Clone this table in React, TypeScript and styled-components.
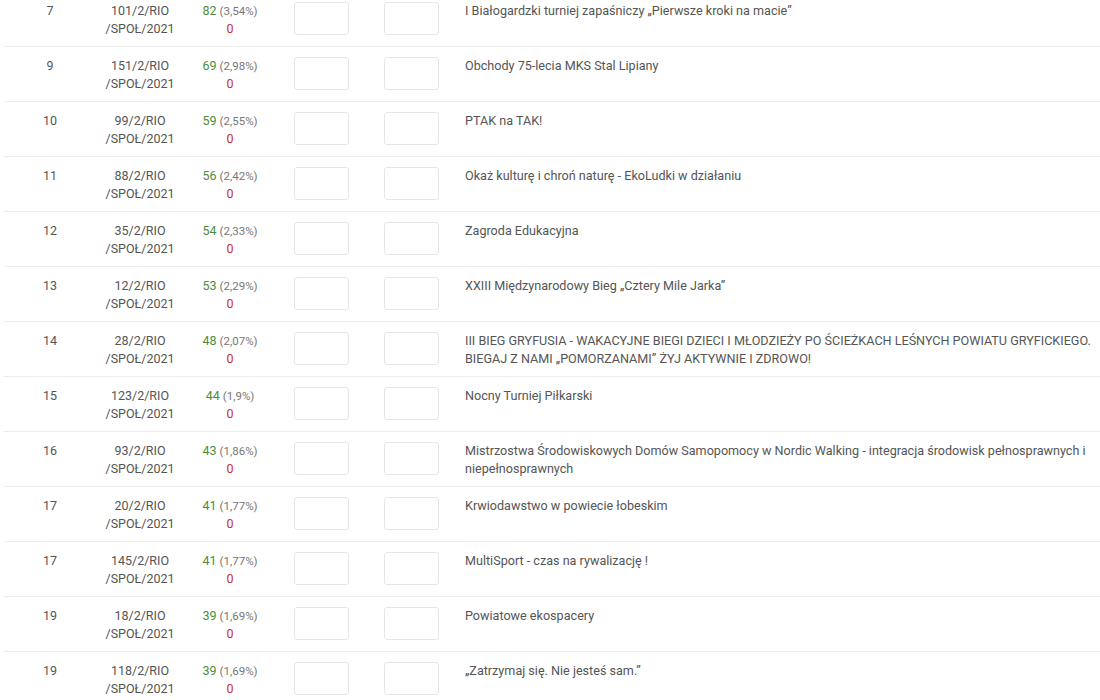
import React from "react";
import styled, { createGlobalStyle } from "styled-components";

const Global = createGlobalStyle`
  html, body { margin: 0; padding: 0; background: #fff; }
  body { font-family: Roboto, "Liberation Sans", sans-serif; color: #555; overflow: hidden; }
`;

type Row = { rank: string; code: string; votes: string; pct: string; title: string };

const rows: Row[] = [
  { rank: "7", code: "101/2/RIO", votes: "82", pct: "(3,54%)", title: "I Białogardzki turniej zapaśniczy „Pierwsze kroki na macie”" },
  { rank: "9", code: "151/2/RIO", votes: "69", pct: "(2,98%)", title: "Obchody 75-lecia MKS Stal Lipiany" },
  { rank: "10", code: "99/2/RIO", votes: "59", pct: "(2,55%)", title: "PTAK na TAK!" },
  { rank: "11", code: "88/2/RIO", votes: "56", pct: "(2,42%)", title: "Okaż kulturę i chroń naturę - EkoLudki w działaniu" },
  { rank: "12", code: "35/2/RIO", votes: "54", pct: "(2,33%)", title: "Zagroda Edukacyjna" },
  { rank: "13", code: "12/2/RIO", votes: "53", pct: "(2,29%)", title: "XXIII Międzynarodowy Bieg „Cztery Mile Jarka”" },
  { rank: "14", code: "28/2/RIO", votes: "48", pct: "(2,07%)", title: "III BIEG GRYFUSIA - WAKACYJNE BIEGI DZIECI I MŁODZIEŻY PO ŚCIEŻKACH LEŚNYCH POWIATU GRYFICKIEGO. BIEGAJ Z NAMI „POMORZANAMI” ŻYJ AKTYWNIE I ZDROWO!" },
  { rank: "15", code: "123/2/RIO", votes: "44", pct: "(1,9%)", title: "Nocny Turniej Piłkarski" },
  { rank: "16", code: "93/2/RIO", votes: "43", pct: "(1,86%)", title: "Mistrzostwa Środowiskowych Domów Samopomocy w Nordic Walking - integracja środowisk pełnosprawnych i niepełnosprawnych" },
  { rank: "17", code: "20/2/RIO", votes: "41", pct: "(1,77%)", title: "Krwiodawstwo w powiecie łobeskim" },
  { rank: "17", code: "145/2/RIO", votes: "41", pct: "(1,77%)", title: "MultiSport - czas na rywalizację !" },
  { rank: "19", code: "18/2/RIO", votes: "39", pct: "(1,69%)", title: "Powiatowe ekospacery" },
  { rank: "19", code: "118/2/RIO", votes: "39", pct: "(1,69%)", title: "„Zatrzymaj się. Nie jesteś sam.”" },
];

const Table = styled.div`
  margin-top: -8px;
  margin-left: 4px;
`;

const TableRow = styled.div`
  display: grid;
  grid-template-columns: 92px 88px 92px 90px 90px 1fr;
  border-bottom: 1px solid #ececec;
  padding: 10px 0 8px;
  height: 36px;
`;

const Cell = styled.div`
  font-size: 12.5px;
  line-height: 18px;
  text-align: center;
  color: #555;
`;

const Votes = styled.span`
  color: #4c8c3c;
  font-size: 12.5px;
`;

const Pct = styled.span`
  color: #777;
  font-size: 11.5px;
`;

const Zero = styled.div`
  color: #c9302c;
`;

const BoxCell = styled.div`
  display: flex;
  justify-content: center;
`;

const InputBox = styled.div`
  width: 53px;
  height: 31px;
  border: 1px solid #e6e6e6;
  border-radius: 3px;
  background: #fff;
`;

const Title = styled.div`
  padding: 0 6px 0 9px;
  font-family: Roboto, "Liberation Sans", sans-serif;
  font-size: 12.6px;
  line-height: 18px;
  color: #555;
`;

export default function App() {
  return (
    <>
      <Global />
      <Table>
        {rows.map((r, i) => (
          <TableRow key={i}>
            <Cell>{r.rank}</Cell>
            <Cell>
              {r.code}
              <br />
              /SPOŁ/2021
            </Cell>
            <Cell>
              <Votes>{r.votes}</Votes> <Pct>{r.pct}</Pct>
              <Zero>0</Zero>
            </Cell>
            <BoxCell>
              <InputBox />
            </BoxCell>
            <BoxCell>
              <InputBox />
            </BoxCell>
            <Title>{r.title}</Title>
          </TableRow>
        ))}
      </Table>
    </>
  );
}
